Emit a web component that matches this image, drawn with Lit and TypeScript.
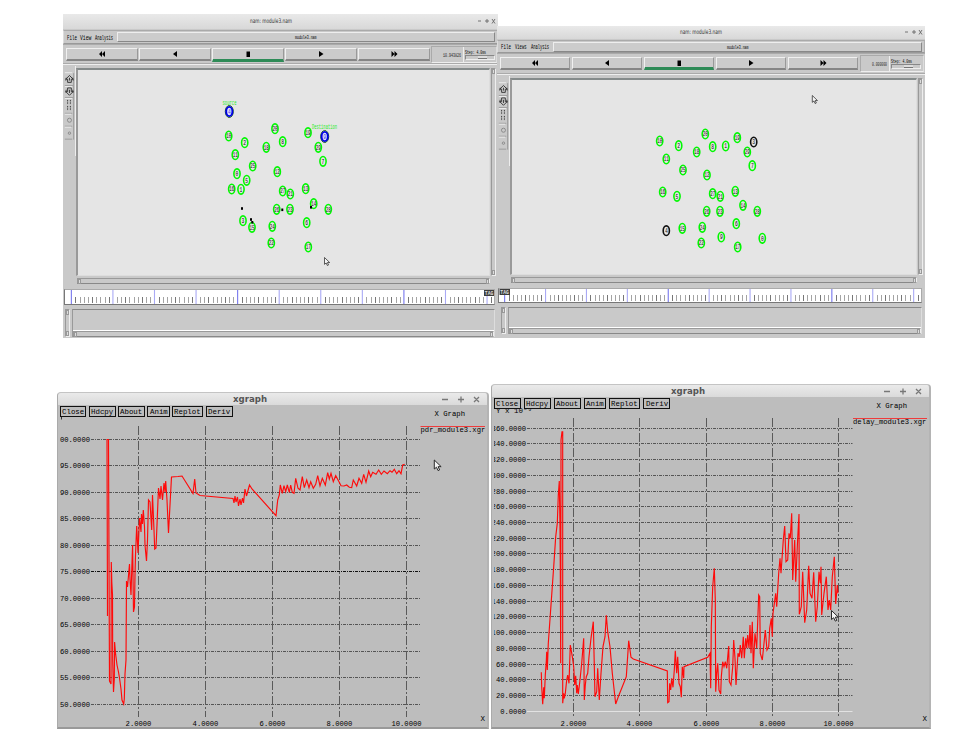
import { LitElement, html, css, svg } from "lit";
import { customElement, property } from "lit/decorators.js";

type Node = [number, number, string, string?];
interface NamData {
  x: number; y: number; w: number; h: number;
  canvas: [number, number];
  nodes: Node[]; packets: [number, number][];
  labels: [number, number, number, string][];
  cursor: [number, number];
  time: string; view: string;
  firstMajor: number; major: number; end: number; marker: number; rulerX: number;
}
interface GraphData {
  x: number; y: number; w: number; h: number;
  yMax: number; yStep: number; count: number; yMin: number; top: number; bottom: number;
  xs: number[]; left: number; right: number; gridTop: number;
  name: string; points: string; cursor: [number, number]; solidBase: boolean; corner: string;
}

const arrow = (x: number, y: number, s: number) => svg`
  <path transform="translate(${x} ${y}) scale(${s})" d="M0 0V9.500L2.300 7.600L4 11.200L5.600 10.400L4 7H7.200Z"
    fill="#f4f4f4" stroke="#222" stroke-width="1"/>`;

const label = (w: number, size: number, text: string, color = "#222", family = "Liberation Mono, monospace", weight = "normal") => html`
  <svg width=${w} height=${size + 2} style="display:block;flex:none;overflow:visible">
    <text x="0" y=${size - 0.5} font-size=${size} textLength=${w} lengthAdjust="spacingAndGlyphs"
      fill=${color} font-family=${family} font-weight=${weight}>${text}</text>
  </svg>`;

/* Joins readings taken at a third of a pixel, counted from a local origin. */
const trace = (ox: number, oy: number, s: string) =>
  s.trim().split(/\s+/).map((p) => {
    const [a, b] = p.split(",").map(Number);
    return `${(ox + a / 3).toFixed(1)},${(oy + b / 3).toFixed(1)}`;
  }).join(" ");

@customElement("nam-window")
export class NamWindow extends LitElement {
  @property({ attribute: false }) data!: NamData;
  @property({ type: Boolean, reflect: true }) compact = false;

  static styles = css`
    :host { display: flex; flex-direction: column; box-sizing: border-box; background: #c9c9c9; overflow: hidden; height: 100%; }
    .title { height: 15px; flex: none; background: linear-gradient(#e9e9e9, #d8d8d8); display: flex; align-items: center; padding-bottom: 1px; box-sizing: border-box; }
    .title .mid { flex: 1; display: flex; justify-content: center; padding-left: 1px; }
    .ctl { padding-right: 2px; }
    .menu { height: 14px; flex: none; margin-top: 1px; display: flex; align-items: center; border: 1px solid; border-color: #aaa #b0b0b0 #999 #ddd; box-sizing: border-box; padding: 0 2px 0 3px; gap: 3.4px; }
    .entry { flex: 1; height: 10px; box-sizing: border-box; border: 1px solid; border-color: #eee #888 #888 #eee; display: flex; justify-content: center; align-items: center; background: #ccc; }
    .bar { height: 20px; flex: none; display: flex; gap: 1.4px; padding: 3px 1px 0 3px; box-sizing: border-box; border-top: 1px solid #aaa; }
    .btn { width: 71.6px; height: 13px; box-sizing: border-box; border: 1px solid; border-color: #f0f0f0 #999 #858585 #f0f0f0; border-bottom-width: 2px; display: flex; align-items: center; justify-content: center; background: #cbcbcb; }
    .btn.stop { border-bottom: 3px solid #2e8b57; height: 14px; }
    .status { flex: 1; height: 17px; margin-top: -2px; display: flex; border: 1px solid; border-color: #aaa #ddd #eee #aaa; box-sizing: border-box; align-items: center; justify-content: flex-end; }
    .step { width: 33px; height: 100%; border-left: 1px solid #eee; margin-left: 2px; box-sizing: border-box; padding: 1px 0 0 1px; }
    .slider { height: 5px; width: 30px; border: 1px solid; border-color: #888 #eee #eee #888; box-sizing: border-box; display: flex; justify-content: center; margin-top: -1px; padding-left: 5px; }
    .thumb { width: 9px; height: 3px; background: #ddd; border-bottom: 1px solid #777; box-sizing: border-box; }
    .body { flex: 1; display: flex; min-height: 0; border-top: 1px solid #eee; box-shadow: 0 -1px #aaa; }
    .tools { width: 13px; flex: none; margin-top: 1px; border-right: 1px solid #eee; box-sizing: border-box; }
    .field { flex: 1; display: flex; flex-direction: column; min-width: 0; padding-top: 3px; }
    .row { flex: 1; display: flex; min-height: 0; }
    .canvas { flex: 1; background: #e5e5e5; border: solid; border-width: 2px 1px 1px 2px; border-color: #858b8b #ddd #ddd #999; box-sizing: border-box; min-width: 0; }
    .canvas svg { display: block; width: 100%; height: 100%; }
    .vs { width: 5px; margin: 0 2px 0 1px; border: 1px solid; border-color: #999 #eee #eee #999; box-sizing: border-box; display: flex; flex-direction: column; justify-content: space-between; }
    .cap { width: 3px; height: 5px; box-sizing: border-box; border: 1px solid #999; background: #ddd; flex: none; }
    .hs { height: 6px; margin: 2px 8px 2px 1px; border: 1px solid; border-color: #999 #eee #888 #999; box-sizing: border-box; display: flex; justify-content: space-between; }
    .ruler { height: 16px; flex: none; margin: 3px 3px 0 1px; box-sizing: border-box; background: #fff; border: 1px solid; border-color: #aaa #aaa #777 #777; }
    .ruler svg { display: block; width: 100%; height: 100%; }
    .foot { height: 28px; flex: none; margin: 4px 3px 1px 1px; display: flex; gap: 1px; }
    .foot .vs { margin: 0 1px; }
    .log { flex: 1; display: flex; flex-direction: column; border-top: 1px solid #888; border-left: 1px solid #999; border-right: 1px solid #ddd; }
    .log .pane { flex: 1; border-bottom: 1px solid #fff; }
    .log .hs { margin: 0; }
    :host([compact]) .title { height: 13px; }
    :host([compact]) .menu { height: 13px; gap: 4px; }
    :host([compact]) .bar { height: 21px; padding-top: 3px; padding-left: 3px; gap: 1.6px; }
    :host([compact]) .btn { width: 70.4px; }
    :host([compact]) .btn.stop { height: 13px; }
    :host([compact]) .step { width: 34px; }
    :host([compact]) .ruler { height: 15px; margin: 3px 3px 0 1px; }
    :host([compact]) .foot { height: 27px; margin: 4px 3px 4px 3px; }
  `;

  private glyph(d: string) {
    return html`<svg width="12" height="8" viewBox="0 0 12 8"><path d=${d} fill="#000"/></svg>`;
  }

  private ruler() {
    const d = this.data;
    const out = [];
    const step = d.major / 10;
    for (let i = 0; d.firstMajor + i * step < d.end; i++) {
      const x = d.firstMajor + i * step - d.rulerX;
      out.push(i % 10 === 0
        ? svg`<rect x=${x - 0.5} y="0" width="1.1" height="14" fill=${i % 40 === 0 ? "#7777ee" : "#aaaaf5"}/>`
        : svg`<rect x=${Math.round(x)} y=${this.compact ? 6 : 7} width="1" height="6" fill=${i % 4 === 1 ? "#777" : "#a4a4a4"}/>`);
    }
    const m = d.marker - d.rulerX;
    return html`<svg>${out}
      ${svg`<rect x=${m} y="0" width="10.5" height="6" fill="#3c3c3c"/>
      <text x=${m + 0.8} y="5" font-size="5.5" textLength="8.600" lengthAdjust="spacingAndGlyphs" font-family="Liberation Mono, monospace" font-weight="bold" fill="#ddd">TAG</text>`}
    </svg>`;
  }

  render() {
    const d = this.data;
    const c = d.canvas;
    return html`
      <div class="title">
        <div class="mid">${label(42, 6.3, "nam: module3.nam", "#333", "DejaVu Sans, sans-serif")}</div>
        <svg class="ctl" width="19" height="8" viewBox="0 0 19 8" stroke="#666" stroke-width=".9" fill="none">
          <path d="M1 4H4M8 4H12M10 2V6M15 2L18 6.500M18 2L15 6.500"/></svg>
      </div>
      <div class="menu">
        ${label(10, 7, "File", "#000")}${label(11.5, 7, d.view, "#000")}${label(18, 7, "Analysis", "#000")}
        <div class="entry">${label(21.5, 6, "module3.nam", "#000")}</div>
      </div>
      <div class="bar">
        <div class="btn">${this.glyph("M6 1V7L3 4ZM9 1V7L6 4Z")}</div>
        <div class="btn">${this.glyph("M8 1V7L4 4Z")}</div>
        <div class="btn stop">${this.glyph("M4.500 1.500H8V7H4.500Z")}</div>
        <div class="btn">${this.glyph("M4 1V7L8.500 4Z")}</div>
        <div class="btn">${this.glyph("M3.500 1V7L6.500 4ZM6.500 1V7L9.500 4Z")}</div>
        <div class="status">
          ${label(this.compact ? 15 : 18, 6, d.time)}
          <div class="step">${label(21, 6, "Step: 4.0ms", "#000")}<div class="slider"><div class="thumb"></div></div></div>
        </div>
      </div>
      <div class="body">
        <svg class="tools" width="13" height="90" viewBox="0 0 13 90" fill="none" stroke="#333" stroke-width="1">
          <g stroke="#999" stroke-width="1"><path d="M2 17.500H11M2 30.500H11M2 47.500H10M2 61.500H10M2 75.500H10M11.500 4V76"/></g>
          <g stroke="#eee"><path d="M2 3.500H10M2 18.500H10M2 31.500H10M2 48.500H9M2 62.500H9"/></g>
          <path d="M7 6.500L11 10.500H9V14H5V10.500H3ZM7 9V12M3.500 9L3 12M10.500 9L11 12"/>
          <path d="M7 28L11 24H9V20H5V24H3ZM7 22V25.500M3.500 22L3 25M10.500 22L11 25"/>
          <path d="M5 33V37.500M8 33V37.500M5 39.500V44M8 39.500V44" stroke-dasharray="1.200 .6"/>
          <g stroke="#888"><circle cx="7" cy="55" r="2.200"/><circle cx="7" cy="69" r="1.300"/></g>
        </svg>
        <div class="field">
          <div class="row">
            <div class="canvas">
              <svg><g transform="translate(${-c[0]} ${-c[1]})">
                ${d.nodes.map(([x, y, n, color]) => svg`
                  ${color === "blue" ? svg`<ellipse cx=${x} cy=${y} rx="4" ry="6" fill="none" stroke="#175a17" stroke-width="1"/>` : ""}
                  <ellipse cx=${x} cy=${y} rx="3.1" ry=${color === "blue" ? 4.6 : 4.8} fill=${color === "blue" ? "#dfe0ff" : "none"}
                    stroke=${color === "blue" ? "#0000e6" : color ?? "#00f800"} stroke-width=${color === "blue" ? 1.9 : 1.6}/>
                  <text x=${x - (n.length > 1 ? 2.5 : 1.4)} y=${y + 2.4} font-size="6.500" textLength=${n.length > 1 ? 5 : 2.8}
                    lengthAdjust="spacingAndGlyphs" fill=${color === "blue" ? "#4444dd" : "#111"}
                    font-family="Liberation Mono, monospace">${n}</text>`)}
                ${d.packets.map(([x, y]) => svg`<rect x=${x - 1} y=${y - 1.3} width="2" height="2.600" fill="#000"/>`)}
                ${d.labels.map(([x, y, w, t]) => svg`<text x=${x} y=${y} font-size="6.500" textLength=${w} lengthAdjust="spacingAndGlyphs"
                  fill="#1eec1e" font-family="Liberation Mono, monospace">${t}</text>`)}
                ${arrow(d.cursor[0], d.cursor[1], 0.72)}
              </g></svg>
            </div>
            <div class="vs"><div class="cap"></div><div class="cap"></div></div>
          </div>
          <div class="hs"><div class="cap"></div><div class="cap"></div></div>
        </div>
      </div>
      <div class="ruler">${this.ruler()}</div>
      <div class="foot">
        <div class="vs"><div class="cap"></div><div class="cap"></div></div>
        <div class="log"><div class="pane"></div><div class="hs"><div class="cap"></div><div class="cap"></div></div></div>
      </div>`;
  }
}

@customElement("xgraph-window")
export class XgraphWindow extends LitElement {
  @property({ attribute: false }) data!: GraphData;
  @property({ type: Boolean, reflect: true }) wide = false;

  static styles = css`
    :host { display: flex; flex-direction: column; box-sizing: border-box; height: 100%; background: #bdbdbd; border: solid; border-width: 1px 2px 2px 1px; border-color: #c4c4c4 #b4b4b4 #999 #aaa; border-radius: 4px 4px 0 0; overflow: hidden; }
    .title { height: 12px; flex: none; background: linear-gradient(#eaeaea, #dadada); display: flex; align-items: center; }
    .mid { flex: 1; display: flex; justify-content: center; }
    .ctl { flex: none; margin: 0 6px 0 0; }
    .wrap { flex: 1; min-height: 0; display: grid; }
    .wrap > * { grid-area: 1 / 1; }
    .plot { display: block; width: 100%; height: 100%; }
    .buttons { align-self: start; display: flex; gap: 2.4px; padding: 1px 0 0 1.500px; z-index: 1; }
    :host([wide]) .buttons { gap: 3px; padding-left: 2px; }
    .b { height: 11px; box-sizing: border-box; border: 1px solid #111; display: flex; align-items: center; padding: 0 1.300px; background: #bdbdbd; }
  `;

  render() {
    const d = this.data;
    const rows = Array.from({ length: d.count + 1 }, (_, i) => i);
    const span = (d.bottom - d.top) / d.count;
    const font = "Liberation Mono, monospace";
    return html`
      <div class="title">
        <div class="mid">${label(34, 8, "xgraph", "#555", "DejaVu Sans, sans-serif", "bold")}</div>
        <svg class="ctl" width="40" height="9" viewBox="0 0 40 9" stroke="#777" stroke-width="1.300" fill="none">
          <path d="M1 4.500H7M17 4.500H23M20 1.500V7.500M33 2L38 7M38 2L33 7"/></svg>
      </div>
      <div class="wrap">
        <div class="buttons">
          ${["Close", "Hdcpy", "About", "Anim", "Replot", "Deriv"].map((t) => html`
            <div class="b">${label(t.length * 4.45, 7.5, t, "#000")}</div>`)}
        </div>
        <svg class="plot" viewBox="${d.x + 1} ${d.y + 13} ${d.w - 3} ${d.h - 15}" preserveAspectRatio="xMinYMin">
          <defs><clipPath id="edge"><rect x=${d.x + 3} y=${d.y} width="500" height="400"/></clipPath></defs>
          <g clip-path="url(#edge)">
          ${rows.map((i) => {
            const y = Math.floor(d.top + i * span) + 0.5;
            const t = (d.yMax - i * d.yStep).toFixed(4);
            const w = t.length * 4.3;
            const base = d.solidBase && i === d.count;
            return svg`
              <path d="M${d.left} ${y}H${d.right}" stroke=${base ? "#e2e2e2" : i === 5 && !d.solidBase ? "#111" : "#555"}
                stroke-width="1" stroke-dasharray=${base ? "none" : "3 1 1 1"} fill="none"/>
              <text x=${d.left - 1 - w} y=${y + 2.6} font-size="7.500" textLength=${w} lengthAdjust="spacingAndGlyphs" font-family=${font}>${t}</text>`;
          })}
          </g>
          ${d.xs.map((x, i) => {
            const t = ((i + 1) * 2).toFixed(4);
            const w = t.length * 4.3;
            return svg`
              <path d="M${x} ${d.gridTop}V717" stroke="#5a5a5a" stroke-width="1" stroke-dasharray="9 2 2 2" fill="none"/>
              <text x=${x - w / 2} y="726" font-size="7.500" textLength=${w} lengthAdjust="spacingAndGlyphs" font-family=${font}>${t}</text>`;
          })}
          ${d.corner
            ? svg`<text x=${d.x + 5} y=${d.y + 29} font-size="7.500" font-family=${font}>${d.corner}</text>`
            : svg`<path d="M${d.x + 4.5} ${d.y + 25}v2.500" stroke="#333"/>`}
          <polyline points=${d.points} fill="none" stroke="#ff0a0a" stroke-width="1.150"/>
          <path d="M${d.right + 0.5} ${d.gridTop + 0.5}H${d.x + d.w - 4}" stroke="#ee3b3b" stroke-width="1"/>
          <text x=${d.right + 0.5} y=${d.gridTop + 6.4} font-size="7.500" textLength=${d.name.length * 4.32} lengthAdjust="spacingAndGlyphs" font-family=${font}>${d.name}</text>
          <text x=${d.x + d.w - 54.5} y=${d.gridTop - 10.5} font-size="7.500" textLength="30.500" lengthAdjust="spacingAndGlyphs" font-family=${font}>X Graph</text>
          <text x=${d.x + d.w - 8.5} y="720.500" font-size="7.500" font-family=${font}>X</text>
          ${arrow(d.cursor[0], d.cursor[1], 0.95)}
        </svg>
      </div>`;
  }
}

const nam1: NamData = {
  x: 63, y: 14, w: 435, h: 324, canvas: [78, 70], view: "View",
  nodes: [
    [229.3, 111.5, "4", "blue"], [324.7, 136.5, "9", "blue"],
    [228.7, 136, "10"], [244.7, 142.7, "2"], [266.3, 147.3, "18"], [275, 128.7, "20"], [235.3, 154.7, "11"],
    [252.7, 166, "25"], [237, 173.7, "0"], [277.3, 171.7, "12"], [282.7, 141.7, "8"], [308, 132.7, "19"],
    [318.3, 147.3, "29"], [323, 161.3, "7"], [246.7, 180.3, "5"], [231.7, 189, "16"], [241, 189.3, "1"],
    [282.7, 191, "27"], [290.3, 194, "21"], [305.7, 188.7, "13"], [313.7, 203.7, "14"], [276.7, 209.3, "26"],
    [290, 209.3, "23"], [328.3, 209.3, "28"], [243, 220.7, "3"], [252, 227.3, "15"], [272.3, 226.3, "24"],
    [306.7, 222.7, "6"], [271.3, 243, "22"], [308.3, 247, "17"],
  ],
  packets: [[242, 208.5], [251, 219.5], [252.3, 222.3], [282.3, 209.8], [311, 207.3]],
  labels: [[222.5, 104.5, 14, "source"], [312, 129, 25, "Destination"]],
  cursor: [324.5, 257.5], time: "10.943826",
  firstMajor: 71.3, major: 41.57, end: 494, marker: 484, rulerX: 65,
};

const nam2: NamData = {
  x: 497, y: 26, w: 428, h: 312, canvas: [512, 80], view: "Views",
  nodes: [
    [753.7, 142, "3", "#111"], [666.3, 230.7, "4", "#111"],
    [659.7, 141, "10"], [678.7, 145.7, "2"], [705.3, 134, "20"], [696.7, 152, "18"], [712.7, 146.7, "8"],
    [725.7, 146, "1"], [666.3, 159, "11"], [683, 170, "25"], [707, 175, "12"], [737.3, 137.7, "19"],
    [747.3, 152, "29"], [752.3, 165.7, "7"], [662.7, 192, "16"], [677, 196.3, "5"], [712.7, 193.7, "27"],
    [720.3, 196.3, "21"], [735.3, 191.3, "13"], [743, 205.3, "14"], [706.7, 211.3, "26"], [720, 211.3, "23"],
    [757.3, 211.3, "28"], [682.3, 228.3, "15"], [702.3, 227.3, "24"], [736.3, 223.7, "6"], [721.3, 237, "9"],
    [762.3, 238.3, "0"], [701.3, 243, "22"], [737.7, 247, "17"],
  ],
  packets: [], labels: [], cursor: [812.3, 95.5], time: "0.000000",
  firstMajor: 504.6, major: 40.9, end: 922, marker: 499.5, rulerX: 499,
};

const pdr: GraphData = {
  x: 57, y: 392, w: 432, h: 337, yMax: 100, yMin: 50, yStep: 5, count: 10, top: 439.2, bottom: 704.3,
  xs: [138.5, 205.5, 272.5, 339.5, 406.5], left: 91, right: 420, gridTop: 426,
  name: "pdr_module3.xgr", cursor: [434.3, 460], solidBase: false, corner: "",
  points: `107.5,616 107,439.500 108.500,439.500 109.500,681 111,684 111.300,562 111.800,582 112.500,595 112.700,660 113.500,692
    114.300,679 114.600,642 115.500,653 117,665 118.500,672 119.500,678 121,689 122,700 123.700,704 124.300,699 125,674 126,660
    126.500,581 127.500,587 129.500,564 130,579 131,595 131.500,578 132.600,545 133.500,612 134.500,607 135,575 135.500,555
    136.700,526 138,553 139.500,518 141,532 141.500,514 142.500,524 143.300,510 144.500,527 145,545 146.500,561 147.500,540
    148.500,500 150,502 151.700,530 152.500,495 154,530 154.700,549 156,548 157,525 158.500,488 160,499 161,486 162.500,500
    164,483 165,492 165.700,481 167,500 168.500,533 171.500,477 178,476.500 182,476 193,493.500 194.700,479 196,493 200,495.500
    233,498.500 234,503 235,496 236,502 237.500,497 238.500,506 240,499 241,505 242.500,498 243.500,503 245,489 246.500,496
    249.500,485 252,489 ` + trace(270, 385, `18,392 23,345 28,330 31,300 37,325 42,302 47,320 52,300 58,322 62,300 67,322 72,325
    77,280 84,310 90,315 97,275 103,308 110,285 117,308 122,290 130,310 137,298 143,272 150,302 157,280 166,300 173,263
    178,282 183,265 190,290 197,272 207,290 213,302 222,303 230,300 238,307 245,308 250,285 260,303 267,280 275,295
    281,268 288,292 296,258 302,275 308,262 318,268 326,255 334,268 342,258 352,266 360,257 366,262 373,253 380,266
    387,257 393,266 398,240 404,238`),
};

const delay: GraphData = {
  x: 491, y: 384, w: 440, h: 345, yMax: 360, yMin: 0, yStep: 20, count: 18, top: 428.2, bottom: 711.2,
  xs: [573.5, 639.5, 706.5, 772.5, 838.5], left: 527, right: 852.5, gridTop: 418,
  name: "delay_module3.xgr", cursor: [831.5, 610.5], solidBase: true, corner: "Y x 10⁻³",
  points: trace(485, 380, `169,877 170,920 173,973 176,922 178,955 181,885 184,843 185,815 187,870 190,790 200,645 206,560
    212,470 217,430 220,345 223,303 225,440 226,560 227,850 228,180 231,155 233,155 233,970 236,940 238,955 241,940 245,900
    248,885 252,910 256,795 262,830 266,860 269,915 272,887 275,940 277,915 280,942 285,900 290,850 296,775 298,960 301,915
    304,890 308,880 312,830 318,775 325,725 330,950 335,935 338,865 343,960 348,880 354,800 360,770 364,706 368,755
    375,800 382,880 392,972 400,950 412,920 424,890 431,782 438,832 445,837 547,873 548,968 552,965 554,910 557,930
    560,895 564,922 568,870 571,812 575,880 578,830 582,910 586,920 589,952 592,860 596,895 597,860 668,832`) + " " +
    trace(700, 380, `30,820 32,925 34,740 38,620 43,565 46,660 47,935 50,880 53,850 57,930 62,942 64,890 68,845 72,860 76,845
    80,865 86,798 88,905 93,915 98,860 101,780 105,835 108,915 114,820 118,830 121,795 125,835 130,770 133,835 137,775
    140,805 143,765 147,805 150,735 153,820 157,725 160,865 165,760 170,805 176,645 179,650 181,820 187,840 192,790
    196,750 201,810 206,800 209,745 214,715 217,770 219,700 227,640 230,680 236,580 240,535 243,580 250,480 254,438
    258,545 263,540 267,460 271,475 275,400 278,600 284,480 287,605 293,475 297,402 298,703 304,680 308,575 314,728
    320,690 326,557 330,640 336,655 341,577 347,725 352,680 357,575 361,610 363,560 365,705 372,640 379,590 384,690
    388,660 392,690 397,590 403,530 407,672 412,615 414,640`),
};

@customElement("app-root")
export class AppRoot extends LitElement {
  static styles = css`
    :host { display: block; position: relative; width: 972px; height: 739px; background: #fff; overflow: hidden; }
    .win { position: absolute; }
  `;

  private place(d: { x: number; y: number; w: number; h: number }) {
    return `left:${d.x}px;top:${d.y}px;width:${d.w}px;height:${d.h}px`;
  }

  render() {
    return html`
      <div class="win" style=${this.place(nam1)}><nam-window .data=${nam1}></nam-window></div>
      <div class="win" style=${this.place(nam2)}><nam-window compact .data=${nam2}></nam-window></div>
      <div class="win" style=${this.place(pdr)}><xgraph-window .data=${pdr}></xgraph-window></div>
      <div class="win" style=${this.place(delay)}><xgraph-window wide .data=${delay}></xgraph-window></div>`;
  }
}
